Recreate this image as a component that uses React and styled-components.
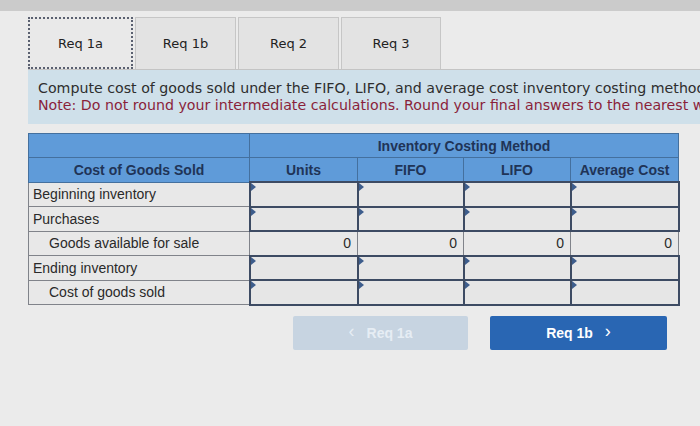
import styled, { createGlobalStyle } from 'styled-components';

const GlobalStyle = createGlobalStyle`
  html, body {
    margin: 0;
    padding: 0;
    background: #ebebeb;
  }
  body {
    width: 700px;
    height: 426px;
    overflow: hidden;
  }
`;

const rows = [
  { label: 'Beginning inventory', indent: false, input: true },
  { label: 'Purchases', indent: false, input: true },
  { label: 'Goods available for sale', indent: true, input: false },
  { label: 'Ending inventory', indent: false, input: true },
  { label: 'Cost of goods sold', indent: true, input: true },
];

const App = () => {
  return (
    <>
      <GlobalStyle />
      <TopBand />
      <Page>
        <Tabs>
          <Tab $active $w={105}>Req 1a</Tab>
          <Tab $w={101}>Req 1b</Tab>
          <Tab $w={101}>Req 2</Tab>
          <Tab $w={100}>Req 3</Tab>
        </Tabs>

        <Instructions>
          <div>Compute cost of goods sold under the FIFO, LIFO, and average cost inventory costing methods.</div>
          <Note>Note: Do not round your intermediate calculations. Round your final answers to the nearest whole dollar.</Note>
        </Instructions>

        <Table>
          <colgroup>
            <col style={{ width: 221 }} />
            <col style={{ width: 108 }} />
            <col style={{ width: 106 }} />
            <col style={{ width: 107 }} />
            <col style={{ width: 108 }} />
          </colgroup>
          <thead>
            <tr>
              <HeadCell />
              <HeadCell colSpan={4}>Inventory Costing Method</HeadCell>
            </tr>
            <tr>
              <HeadCell>Cost of Goods Sold</HeadCell>
              <HeadCell>Units</HeadCell>
              <HeadCell>FIFO</HeadCell>
              <HeadCell>LIFO</HeadCell>
              <HeadCell>Average Cost</HeadCell>
            </tr>
          </thead>
          <tbody>
            {rows.map((r) => (
              <tr key={r.label}>
                <LabelCell $indent={r.indent}>{r.label}</LabelCell>
                {[0, 1, 2, 3].map((i) =>
                  r.input ? (
                    <InputCell key={i}>
                      <Marker />
                    </InputCell>
                  ) : (
                    <ValueCell key={i}>0</ValueCell>
                  )
                )}
              </tr>
            ))}
          </tbody>
        </Table>

        <Nav>
          <NavButton $w={175}>
            <Chevron>&lsaquo;</Chevron> Req 1a
          </NavButton>
          <NavButton $primary $w={177}>
            Req 1b <Chevron>&rsaquo;</Chevron>
          </NavButton>
        </Nav>
      </Page>
    </>
  );
};

const TopBand = styled.div`
  height: 11px;
  background: #cbcbcb;
`;

const Page = styled.div`
  padding-left: 28px;
`;

const Tabs = styled.div`
  display: flex;
  gap: 2px;
  margin-top: 6px;
  height: 52px;
  border-bottom: 1px solid #c4c4c4;
`;

const Tab = styled.div`
  width: ${(p) => p.$w}px;
  box-sizing: border-box;
  display: flex;
  align-items: center;
  justify-content: center;
  font-family: 'DejaVu Sans', Verdana, sans-serif;
  font-size: 13px;
  color: #222;
  background: ${(p) => (p.$active ? '#e9e9e9' : '#e3e3e3')};
  border: ${(p) => (p.$active ? '2px dotted #5a6070' : '1px solid #c6c6c6')};
  border-bottom: ${(p) => (p.$active ? '2px dotted #5a6070' : 'none')};
`;

const Instructions = styled.div`
  background: #cfe0ea;
  height: 54px;
  box-sizing: border-box;
  padding: 10px 0 0 10px;
  font-family: 'DejaVu Sans', Verdana, sans-serif;
  font-size: 14.2px;
  line-height: 17px;
  color: #2e2e2e;
  white-space: nowrap;
  overflow: hidden;
`;

const Note = styled.div`
  color: #8a1f3a;
`;

const Table = styled.table`
  margin-top: 9px;
  width: 650px;
  border-collapse: collapse;
  table-layout: fixed;
  font-family: 'Liberation Sans', Arial, sans-serif;
  font-size: 14px;
  color: #2a2a2a;
  border: 1px solid #7d8088;
`;

const HeadCell = styled.th`
  height: 23px;
  padding: 0;
  background: #5f9bd9;
  color: #1f3457;
  font-weight: bold;
  font-size: 14px;
  text-align: center;
  border: 1px solid #44709e;
`;

const LabelCell = styled.td`
  height: 22.5px;
  padding: 0 0 0 ${(p) => (p.$indent ? '20px' : '4px')};
  background: #e8e8e8;
  border: 1px solid #80838a;
  white-space: nowrap;
`;

const InputCell = styled.td`
  position: relative;
  height: 22.5px;
  padding: 0;
  background: #e6e6e6;
  border: 2px solid #3d4b63;
`;

const Marker = styled.span`
  position: absolute;
  left: 0;
  top: 0;
  width: 0;
  height: 0;
  border-top: 4px solid transparent;
  border-bottom: 4px solid transparent;
  border-left: 5px solid #3d5d8c;
`;

const ValueCell = styled.td`
  height: 22.5px;
  padding: 0 6px 0 0;
  text-align: right;
  background: #e8e8e8;
  border: 1px solid #80838a;
`;

const Nav = styled.div`
  display: flex;
  gap: 22px;
  margin: 10px 0 0 265px;
`;

const NavButton = styled.div`
  width: ${(p) => p.$w}px;
  height: 34px;
  display: flex;
  align-items: center;
  justify-content: center;
  gap: 12px;
  border-radius: 2px;
  font-family: 'Liberation Sans', Arial, sans-serif;
  font-weight: bold;
  font-size: 14px;
  background: ${(p) => (p.$primary ? '#2966b3' : '#c7d4e1')};
  color: ${(p) => (p.$primary ? '#ffffff' : '#e6edf4')};
`;

const Chevron = styled.span`
  font-size: 18px;
  font-weight: normal;
  line-height: 1;
  margin-top: -3px;
`;

export default App;
